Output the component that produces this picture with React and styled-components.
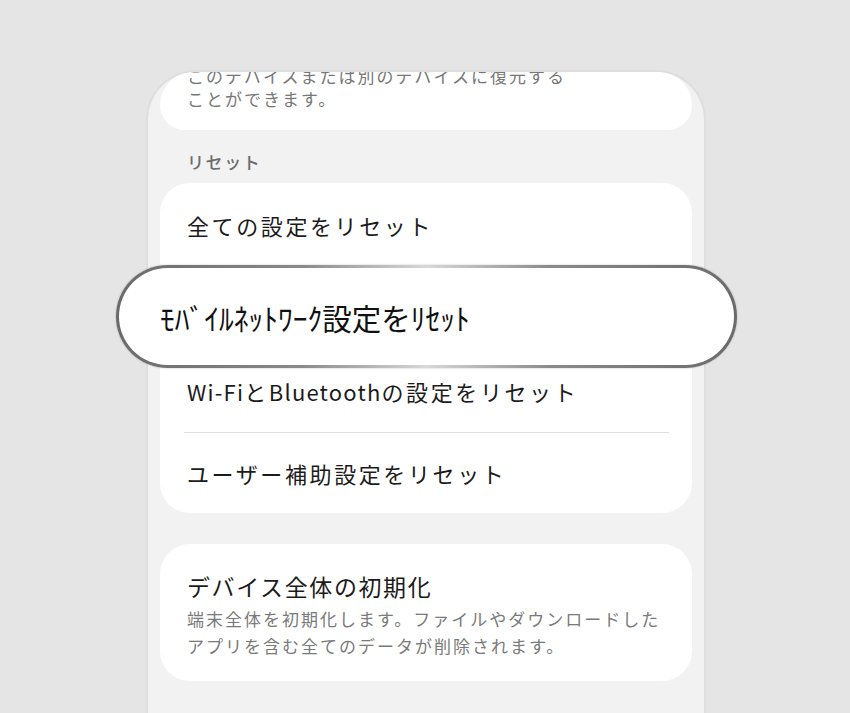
import React from "react";
import styled, { createGlobalStyle } from "styled-components";

const GlobalStyle = createGlobalStyle`
  html, body {
    margin: 0;
    padding: 0;
    background: #e5e5e5;
  }
  body {
    font-family: "Noto Sans CJK JP", "Noto Sans", sans-serif;
    overflow: hidden;
  }
`;

const Page = styled.div`
  height: 713px;
  padding: 70px 0 0 146px;
  box-sizing: border-box;
`;

const Screen = styled.div`
  width: 560px;
  height: 643px;
  box-sizing: border-box;
  background: #f2f2f3;
  border: 2px solid #dedede;
  border-bottom: none;
  border-radius: 50px 50px 0 0;
  padding: 0 12px;
`;

const Card = styled.div`
  background: #fff;
  border-radius: 30px;
  position: relative;
`;

const TopCard = styled(Card)`
  height: 58px;
  overflow: hidden;
  border-radius: 38px 38px 28px 28px;
  padding: 0 27px;
`;

const TopText = styled.p`
  margin: -8px 0 0;
  font-size: 17px;
  line-height: 23px;
  letter-spacing: 2px;
  color: #777;
  white-space: nowrap;
`;

const SectionLabel = styled.div`
  padding: 21px 27px 10px;
  font-size: 17px;
  line-height: 22px;
  font-weight: 500;
  letter-spacing: 1.6px;
  color: #6c6c6c;
`;

const Row = styled.div`
  height: ${(p) => p.$h || 83}px;
  display: flex;
  align-items: center;
  padding: 0 27px;
  font-size: 22px;
  letter-spacing: 2.6px;
  color: #1b1b1b;
  white-space: nowrap;
`;

const Latin = styled.span`
  letter-spacing: 1.2px;
`;

const Divider = styled.div`
  height: 1px;
  background: #dfdfdf;
  margin: 0 23px 0 24px;
`;

const Callout = styled.div`
  position: relative;
  z-index: 2;
  height: 103px;
  box-sizing: border-box;
  margin: -1px -45px -19px -44px;
  padding-left: 41px;
  display: flex;
  align-items: center;
  border: 3px solid transparent;
  border-radius: 52px;
  background:
    linear-gradient(#fff, #fff) padding-box,
    linear-gradient(90deg, #6a6a6a 0%, #8a8a8a 30%, #d8d8d8 50%, #8a8a8a 70%, #6a6a6a 100%) border-box;
  box-shadow: 0 0 2px rgba(0, 0, 0, 0.25);
  font-size: 29.5px;
  color: #111;
  white-space: nowrap;
`;

const ResetCard = styled(Card)`
  margin-bottom: 31px;
`;

const InfoCard = styled(Card)`
  padding: 27px 27px 22px;
`;

const InfoTitle = styled.div`
  font-size: 23px;
  line-height: 30px;
  letter-spacing: 1.6px;
  color: #1b1b1b;
  margin-bottom: 4px;
`;

const InfoText = styled.div`
  font-size: 17px;
  line-height: 27px;
  letter-spacing: 2px;
  color: #7a7a7a;
  white-space: nowrap;
`;

export default function App() {
  return (
    <>
      <GlobalStyle />
      <Page>
        <Screen>
          <TopCard>
            <TopText>
              このデバイスまたは別のデバイスに復元する
              <br />
              ことができます。
            </TopText>
          </TopCard>
          <SectionLabel>リセット</SectionLabel>
          <ResetCard>
            <Row>全ての設定をリセット</Row>
            <Callout>ﾓﾊﾞｲﾙﾈｯﾄﾜｰｸ設定をﾘｾｯﾄ</Callout>
            <Row>
              <Latin>Wi-Fi</Latin>と<Latin>Bluetooth</Latin>の設定をリセット
            </Row>
            <Divider />
            <Row $h={80}>ユーザー補助設定をリセット</Row>
          </ResetCard>
          <InfoCard>
            <InfoTitle>デバイス全体の初期化</InfoTitle>
            <InfoText>
              端末全体を初期化します。ファイルやダウンロードした
              <br />
              アプリを含む全てのデータが削除されます。
            </InfoText>
          </InfoCard>
        </Screen>
      </Page>
    </>
  );
}
